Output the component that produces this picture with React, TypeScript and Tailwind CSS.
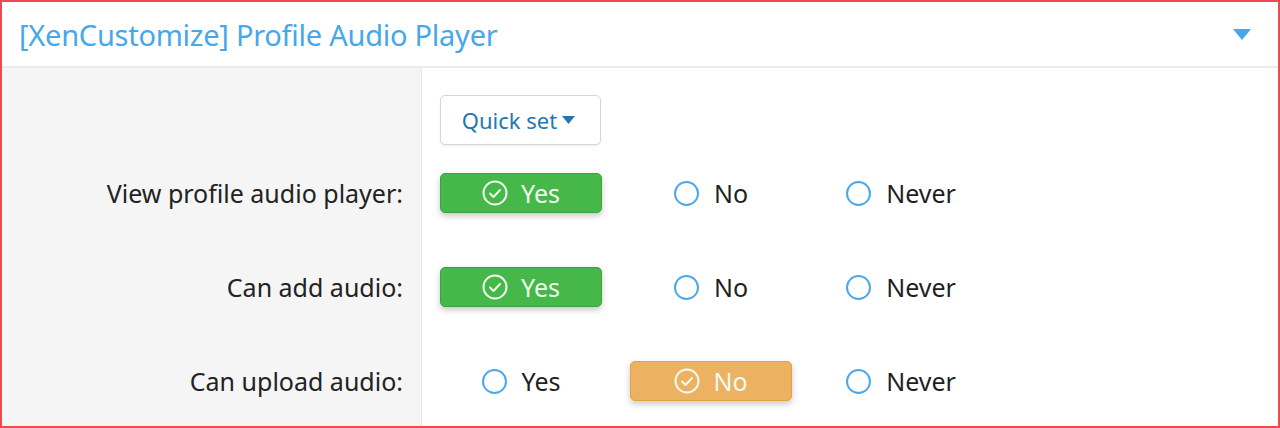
import React from "react";

type Choice = "yes" | "no" | "never";

const rows: { label: string; value: Choice }[] = [
  { label: "View profile audio player:", value: "yes" },
  { label: "Can add audio:", value: "yes" },
  { label: "Can upload audio:", value: "no" },
];

const options: { key: Choice; text: string }[] = [
  { key: "yes", text: "Yes" },
  { key: "no", text: "No" },
  { key: "never", text: "Never" },
];

const CheckCircle = () => (
  <svg width="26" height="26" viewBox="0 0 26 26" fill="none" stroke="currentColor" strokeWidth="2" strokeLinecap="round" strokeLinejoin="round">
    <circle cx="13" cy="13" r="11.5" />
    <path d="M8 13.5 L11.5 17 L18 10" />
  </svg>
);

const Option = ({ text, active, tone }: { text: string; active: boolean; tone: Choice }) => {
  if (active) {
    const color =
      tone === "no"
        ? "bg-[#ecb262] border-[#e3a245]"
        : "bg-[#45b849] border-[#3aa53e]";
    return (
      <div
        className={`w-[162px] h-[40px] rounded-[5px] border flex items-center justify-center gap-[13px] text-[#eefbee] shadow-[0_3px_6px_rgba(0,0,0,0.22)] ${color}`}
      >
        <CheckCircle />
        <span className="pt-[2px]">{text}</span>
      </div>
    );
  }
  return (
    <div className="w-[162px] h-[40px] flex items-center justify-center gap-[15px] text-[#1f1f1f]">
      <span className="w-[25px] h-[25px] rounded-full border-[2.5px] border-[#4aa8ec] bg-white" />
      <span className="pt-[2px]">{text}</span>
    </div>
  );
};

export default function App() {
  return (
    <div className="w-[1280px] h-[428px] overflow-hidden border-2 border-[#ef4a4f] bg-white font-['Noto_Sans',sans-serif]">
      {/* Header */}
      <div className="h-[66px] flex items-center justify-between pl-[17px] pr-[27px] border-b-2 border-[#ececec]">
        <h2 className="text-[29px] text-[#47a7eb] tracking-[-0.25px] pt-[2px]">[XenCustomize] Profile Audio Player</h2>
        <svg width="18" height="11" viewBox="0 0 18 11">
          <path d="M0 0 H18 L9 11 Z" fill="#47a7eb" />
        </svg>
      </div>

      {/* Quick set row */}
      <div className="flex h-[78px]">
        <div className="w-[420px] bg-[#f5f5f5] border-r border-[#e6e6e6]" />
        <div className="pl-[18px] pt-[27px]">
          <button className="w-[161px] h-[50px] rounded-[5px] border border-[#d6d6d6] bg-white shadow-[0_1px_2px_rgba(0,0,0,0.08)] flex items-center justify-center gap-[5px] pr-[4px] text-[22px] text-[#2577b1]">
            <span>Quick set</span>
            <svg width="13" height="8" viewBox="0 0 13 8">
              <path d="M0 0 H13 L6.5 8 Z" fill="#2577b1" />
            </svg>
          </button>
        </div>
      </div>

      {rows.map((row) => (
        <div key={row.label} className="flex h-[94px] text-[25px]">
          <div className="w-[420px] bg-[#f5f5f5] border-r border-[#e6e6e6] flex items-center justify-end pr-[18px] pt-[2px] text-[#222]">
            {row.label}
          </div>
          <div className="pl-[18px] flex items-center gap-[28px]">
            {options.map((o) => (
              <Option key={o.key} text={o.text} active={row.value === o.key} tone={o.key} />
            ))}
          </div>
        </div>
      ))}
    </div>
  );
}
